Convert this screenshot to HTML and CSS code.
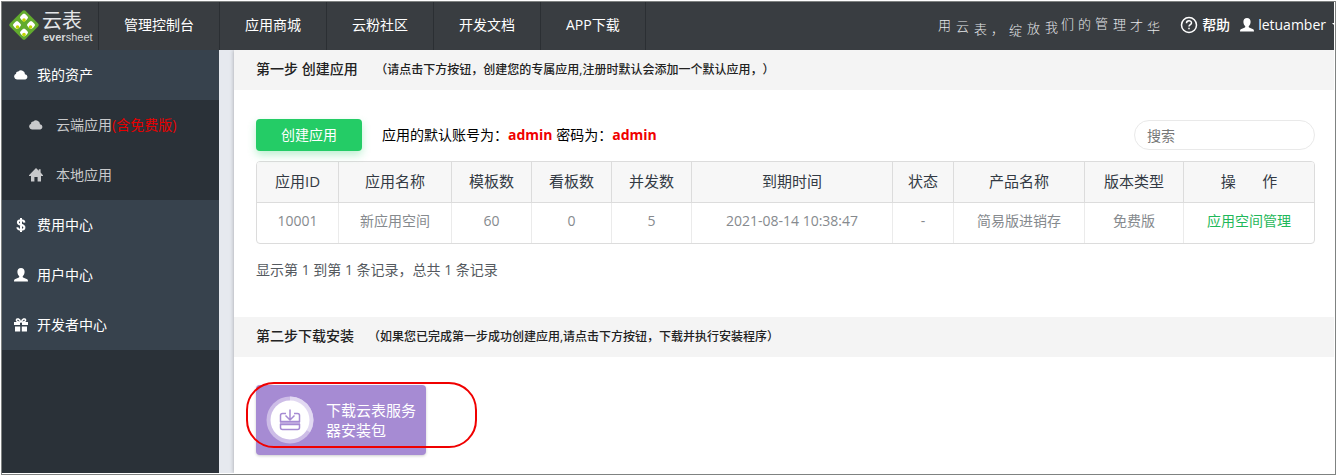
FILE: index.html
```html
<!DOCTYPE html>
<html lang="zh-CN">
<head>
  <meta charset="UTF-8">
  <meta name="viewport" content="width=device-width, initial-scale=1.0">
  <title>云表 - 管理控制台</title>
  <link rel="stylesheet" href="styles.css">
</head>
<body>
  <!-- shared icons -->
  <svg class="sprite" aria-hidden="true">
    <symbol id="icon-cloud" viewBox="0 0 14 14">
      <path d="M3 11.5a3 3 0 0 1-.9-5.8A1.9 1.9 0 0 1 4.3 3.6 3.9 3.9 0 0 1 11 6.2a2.7 2.7 0 0 1 .4 5.3z"/>
    </symbol>
    <symbol id="icon-home" viewBox="0 0 14 14">
      <path d="M7 0l2.8 2.8V1.2h1.8v3.4L14 7.2V8h-2v5.5H8.6V9H5.4v4.5H2V8H0v-.8z"/>
    </symbol>
    <symbol id="icon-user" viewBox="0 0 14 14">
      <path d="M7 0c2.3 0 3.6 1.5 3.6 3.8 0 1.7-.7 3.3-1.7 4.2-.3.3-.2 1.4.2 1.6l3.5 1.4c.9.4 1.4 1.1 1.4 2.5H0c0-1.4.5-2.1 1.4-2.5l3.5-1.4c.4-.2.5-1.3.2-1.6-1-.9-1.7-2.5-1.7-4.2C3.4 1.5 4.7 0 7 0z"/>
    </symbol>
    <symbol id="icon-dollar" viewBox="0 0 14 14">
      <path fill="none" stroke="currentColor" stroke-width="2" d="M10.4 4.6C10.3 3 9 2.3 7 2.3S3.9 3.1 3.9 4.5c0 3.2 6.5 1.4 6.5 4.9 0 1.5-1.3 2.3-3.4 2.3S3.5 10.8 3.4 9.2M7 0v14"/>
    </symbol>
    <symbol id="icon-gift" viewBox="0 0 14 14">
      <path d="M0 4h6v3H0zM8 4h6v3H8zM1 8.5h5.2v5H1zM7.8 8.5H13v5H7.8z"/>
      <path fill="none" stroke="currentColor" stroke-width="1.5" d="M6.7 4.2C5 4.2 2 3.5 2.5 1.8 3 .2 5.7.6 6.7 4.2M7.3 4.2c1.7 0 4.7-.7 4.2-2.4C11 .2 8.3.6 7.3 4.2"/>
    </symbol>
  </svg>

  <header class="topbar">
    <a class="logo" href="#" aria-label="云表 eversheet">
      <svg width="90" height="40" viewBox="0 0 90 40">
        <rect x="8" y="8" width="22" height="22" rx="2" fill="#62ab2e" transform="rotate(45 19 19)"/>
        <g fill="#fff">
          <path id="petal" d="M19 7.5c1 0 4 3 4 4s-3 4-4 4-4-3-4-4 3-4 4-4z"/>
          <use href="#petal" x="-7" y="7.5"/>
          <use href="#petal" x="7" y="7.5"/>
          <use href="#petal" y="15"/>
        </g>
        <g fill="#c3d600">
          <circle cx="19" cy="14" r="1.8"/><circle cx="12.5" cy="21" r="1.8"/>
          <circle cx="25.5" cy="21" r="1.8"/><circle cx="19" cy="28.5" r="1.8"/>
        </g>
        <text class="logo-cn" x="37" y="22">云表</text>
        <text class="logo-en" x="38" y="35"><tspan class="logo-strong">ever</tspan>sheet</text>
      </svg>
    </a>
    <nav class="topnav">
      <a href="#">管理控制台</a>
      <a href="#">应用商城</a>
      <a href="#">云粉社区</a>
      <a href="#">开发文档</a>
      <a href="#">APP下载</a>
    </nav>
    <svg class="slogan" width="224" height="28" viewBox="0 0 224 28">
      <text x="0 18 36 53 71 89 107 123 140 157 175 192 209" y="18 19 22 22 23 21 20 17 17 16 17 18 20">用云表，绽放我们的管理才华</text>
    </svg>
    <div class="tools">
      <a class="help" href="#">
        <svg width="18" height="18" viewBox="0 0 18 18" fill="none" stroke="#fff" stroke-width="1.5">
          <circle cx="9" cy="9" r="7.5"/>
          <path d="M6.5 7.2c0-3.2 5-3.2 5-.3 0 1.7-2.5 1.8-2.5 3.6M9 11.7v1.6"/>
        </svg>
        帮助
      </a>
      <a class="account" href="#">
        <svg class="icon"><use href="#icon-user"/></svg>
        letuamber
        <span class="caret"></span>
      </a>
    </div>
  </header>

  <div class="layout">
    <aside class="sidebar">
      <a class="menu" href="#"><svg class="icon"><use href="#icon-cloud"/></svg>我的资产</a>
      <div class="submenu">
        <a href="#"><svg class="icon"><use href="#icon-cloud"/></svg><span>云端应用<span class="free">(含免费版)</span></span></a>
        <a href="#"><svg class="icon"><use href="#icon-home"/></svg>本地应用</a>
      </div>
      <a class="menu" href="#"><svg class="icon"><use href="#icon-dollar"/></svg>费用中心</a>
      <a class="menu" href="#"><svg class="icon"><use href="#icon-user"/></svg>用户中心</a>
      <a class="menu" href="#"><svg class="icon"><use href="#icon-gift"/></svg>开发者中心</a>
    </aside>

    <main class="content">
      <h2 class="step">第一步 创建应用&nbsp;<small>（请点击下方按钮，创建您的专属应用,注册时默认会添加一个默认应用，）</small></h2>
      <section class="panel">
        <div class="toolbar">
          <button class="create" type="button">创建应用</button>
          <p>应用的默认账号为：<b>admin</b> 密码为：<b>admin</b></p>
          <input class="search" type="search" placeholder="搜索" aria-label="搜索">
        </div>
        <table class="apps">
          <colgroup>
            <col class="c-id"><col class="c-name"><col class="c-num"><col class="c-num"><col class="c-num">
            <col class="c-date"><col class="c-state"><col class="c-product"><col class="c-type"><col class="c-action">
          </colgroup>
          <thead>
            <tr>
              <th>应用ID</th><th>应用名称</th><th>模板数</th><th>看板数</th><th>并发数</th>
              <th>到期时间</th><th>状态</th><th>产品名称</th><th>版本类型</th><th>操&emsp;&nbsp;&nbsp;&nbsp;作</th>
            </tr>
          </thead>
          <tbody>
            <tr>
              <td>10001</td><td>新应用空间</td><td>60</td><td>0</td><td>5</td>
              <td>2021-08-14 10:38:47</td><td>-</td><td>简易版进销存</td><td>免费版</td><td><a href="#">应用空间管理</a></td>
            </tr>
          </tbody>
        </table>
        <p class="total">显示第 1 到第 1 条记录，总共 1 条记录</p>
      </section>

      <h2 class="step">第二步下载安装<small>（如果您已完成第一步成功创建应用,请点击下方按钮，下载并执行安装程序）</small></h2>
      <section class="panel">
        <div class="download-wrap">
          <a class="download" href="#">
            <svg width="48" height="48" viewBox="0 0 48 48">
              <circle cx="24" cy="24" r="23.5" fill="#cdbde7"/>
              <path d="M24 .5a23.5 23.5 0 0 1 20 35.8L24 24z" fill="#e2d9f2"/>
              <circle cx="24" cy="24" r="19.5" fill="#fff"/>
              <path d="M14 25.5h20v3H14z" fill="#c4b1e2"/>
              <g fill="none" stroke="#a68bd3" stroke-width="1.5">
                <path d="M20 17.5h-3.5a2 2 0 0 0-2 2v6h19v-6a2 2 0 0 0-2-2H28"/>
                <path d="M14.5 28.5h19v3a2 2 0 0 1-2 2h-15a2 2 0 0 1-2-2z"/>
                <path d="M24 13.5v10M19.5 19.5l4.5 4.5 4.5-4.5"/>
              </g>
            </svg>
            <span>下载云表服务器安装包</span>
          </a>
          <div class="marker"></div>
        </div>
      </section>
    </main>
  </div>
</body>
</html>
```
FILE: styles.css
```css
* {
  box-sizing: border-box;
}
html {
  height: 100%;
  padding: 1px 0 0 1px;
  background: #fff;
}
body {
  display: flex;
  flex-direction: column;
  min-height: 100%;
  margin: 0;
  padding: 0 1px 1px 0;
  border: 1px solid #7f8281;
  font-family: "Open Sans", "Noto Sans CJK SC", sans-serif;
  font-size: 14px;
  line-height: 20px;
  text-spacing-trim: space-all;
  color: #000;
}
a {
  color: inherit;
  text-decoration: none;
}
p {
  margin: 0;
}
.sprite {
  position: absolute;
  width: 0;
  height: 0;
}
.icon {
  flex: none;
  width: 14px;
  height: 14px;
  fill: currentColor;
}

/* top bar */
.topbar {
  display: flex;
  align-items: center;
  height: 48px;
  overflow: hidden;
  background: #393d41;
  color: #fff;
}
.logo {
  flex: none;
  width: 96px;
  height: 40px;
  padding-left: 3px;
}
.logo svg {
  display: block;
}
.logo-cn {
  fill: #e4e6e8;
  font-size: 20px;
}
.logo-en {
  fill: #d6d8da;
  font-family: "Liberation Sans", sans-serif;
  font-size: 11px;
}
.logo-strong {
  font-weight: bold;
}
.topnav {
  display: flex;
  flex: none;
  align-self: stretch;
  border-right: 1px solid #2b2f33;
}
.topnav a {
  padding: 0 25px;
  border-left: 1px solid #2b2f33;
  line-height: 46px;
}
.slogan {
  flex: none;
  margin-left: auto;
}
.slogan text {
  fill: #e6e8ea;
  font-size: 13px;
  font-weight: 300;
}
.tools {
  display: flex;
  flex: none;
  gap: 10px;
  margin-left: 18px;
  margin-right: -6px;
  padding-bottom: 2px;
}
.tools a {
  display: flex;
  align-items: center;
  gap: 4px;
}
.help {
  font-weight: 500;
}
.caret {
  margin-left: 2px;
  border: 4px solid transparent;
  border-top-color: #fff;
  border-bottom: 0;
}

/* side menu */
.layout {
  display: flex;
  flex: 1;
  background: #e6e9ef;
}
.sidebar {
  flex: none;
  width: 217px;
  background: #2a3138;
}
.sidebar a {
  display: flex;
  align-items: center;
  height: 50px;
}
.menu {
  gap: 9px;
  padding-left: 12px;
  background: #37424d;
  color: #fff;
}
.submenu a {
  gap: 13px;
  padding-left: 27px;
  color: #c8c9cb;
}
.free {
  color: #e60000;
}

/* content */
.content {
  flex: 1;
  min-width: 0;
  margin-left: 15px;
  background: #fff;
  box-shadow: 0 0 4px rgba(0, 0, 0, 0.3);
  clip-path: inset(0 0 0 -8px);
}
.step {
  display: flex;
  align-items: baseline;
  height: 40px;
  margin: 0;
  padding: 9px 22px 0;
  background: #f4f4f4;
  color: #222;
  font-size: 14px;
  font-weight: 500;
}
.step small {
  margin-left: 14px;
  font-size: 12px;
}
.panel {
  padding: 28px 19px 18px 22px;
}
.toolbar {
  display: flex;
  align-items: center;
  gap: 20px;
  height: 34px;
  margin-bottom: 9px;
}
.toolbar b {
  color: #f00000;
}
.create {
  width: 106px;
  height: 32px;
  padding: 0;
  border: 0;
  border-radius: 4px;
  background: #24cc66;
  box-shadow: 0 4px 8px rgba(36, 204, 102, 0.3);
  color: #fff;
  font: inherit;
  cursor: pointer;
}
.search {
  width: 181px;
  height: 30px;
  margin-left: auto;
  padding: 0 12px;
  border: 1px solid #e9e9e9;
  border-radius: 15px;
  outline: none;
  font: inherit;
}
.search::placeholder {
  color: #777;
}
.apps {
  width: 100%;
  table-layout: fixed;
  border: 1px solid #dcdcdc;
  border-radius: 4px;
  border-spacing: 0;
  overflow: hidden;
  text-align: center;
}
.apps th,
.apps td {
  height: 41px;
  padding: 0 0 2px;
  border-right: 1px solid #dcdcdc;
}
.apps th {
  border-bottom: 1px solid #dcdcdc;
  background: #f7f7f7;
  color: #333a44;
  font-size: 15px;
  font-weight: 400;
}
.apps td {
  height: 40px;
  padding-bottom: 4px;
  border-color: #ebebeb;
  color: #868a8e;
}
.apps th:last-child,
.apps td:last-child {
  border-right: 0;
}
.apps td a {
  color: #1fb85a;
}
.c-id { width: 82px; }
.c-name { width: 113px; }
.c-num { width: 80px; }
.c-date { width: 201px; }
.c-state { width: 61px; }
.c-product { width: 131px; }
.c-type { width: 99px; }
.c-action { width: 130px; }
.total {
  margin-top: 16px;
  margin-bottom: 19px;
  color: #555a60;
}

/* download */
.download-wrap {
  position: relative;
}
.download {
  display: flex;
  align-items: center;
  gap: 12px;
  width: 170px;
  height: 70px;
  padding: 0 10px;
  border-radius: 4px;
  background: #a68bd3;
  box-shadow: 0 1px 3px rgba(0, 0, 0, 0.2);
  color: #fff;
  font-size: 15px;
}
.download svg {
  flex: none;
}
.marker {
  position: absolute;
  top: -3px;
  left: -10px;
  width: 231px;
  height: 66px;
  border: 2px solid #f00000;
  border-radius: 28px;
  pointer-events: none;
}
```
